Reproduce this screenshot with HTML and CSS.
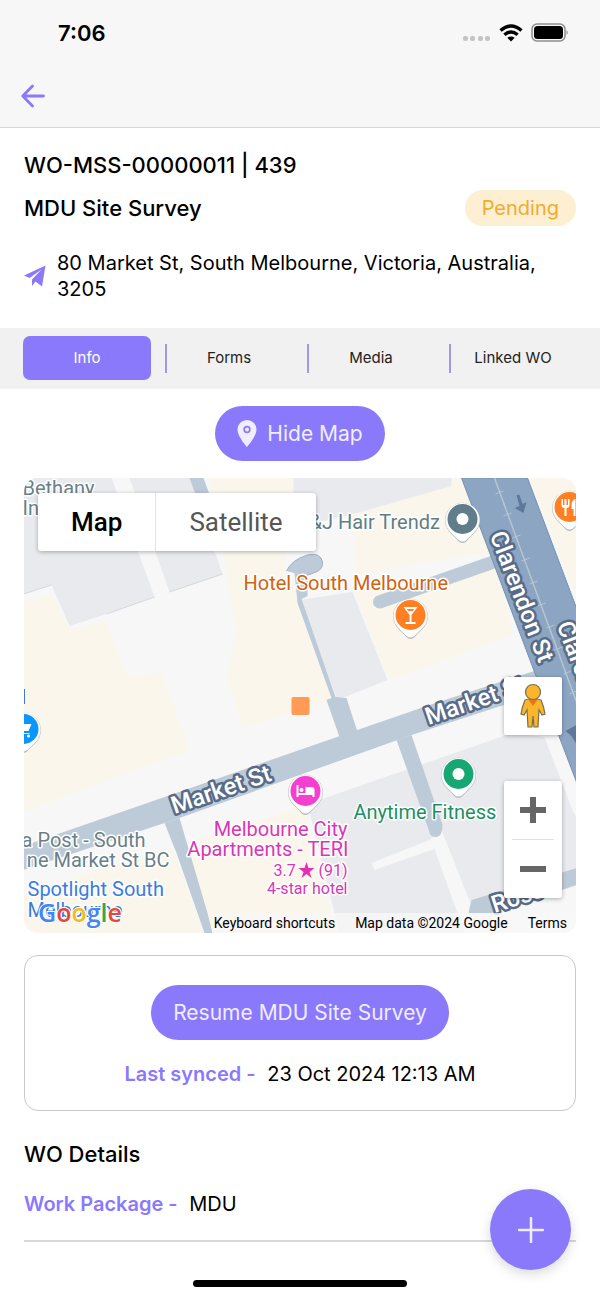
FILE: index.html
```
<!DOCTYPE html>
<html lang="en">
<head>
  <meta charset="UTF-8">
  <meta name="viewport" content="width=device-width, initial-scale=1">
  <title>MDU Site Survey</title>
  <link rel="stylesheet" href="styles.css">
</head>
<body>
  <header class="topbar">
    <div class="status">
      <span class="time">7:06</span>
      <div class="status-icons">
        <svg width="28" height="6" viewBox="0 0 28 6" fill="#c4c4c4">
          <rect x="0" y="0" width="5" height="5" rx="2"/>
          <rect x="7" y="0" width="5" height="5" rx="2"/>
          <rect x="15" y="0" width="5" height="5" rx="2"/>
          <rect x="22" y="0" width="5" height="5" rx="2"/>
        </svg>
        <svg width="24" height="18" viewBox="0 0 24 18">
          <path d="M1.500 6.500Q12-2.500 22.500 6.500M5.400 10.800Q12 5 18.600 10.800" fill="none" stroke="#000" stroke-width="3.400"/>
          <path d="M12 17.500L8.300 13.800Q12 11 15.700 13.800Z"/>
        </svg>
        <svg width="38" height="20" viewBox="0 0 38 20">
          <rect x="1" y="1" width="33" height="17" rx="5" fill="none" stroke="#8e8e8e" stroke-width="1.500"/>
          <rect x="3" y="3" width="29" height="13" rx="3.500"/>
          <path d="M35.500 7Q38 9.500 35.500 12Z" fill="#8e8e8e"/>
        </svg>
      </div>
    </div>
    <a class="back" href="#" aria-label="Back">
      <svg width="24" height="24" viewBox="0 0 24 24" fill="none" stroke="#8b79fb" stroke-width="2.800" stroke-linecap="round" stroke-linejoin="round">
        <path d="M22.500 12H2M11.500 2L1.800 12L11.500 22"/>
      </svg>
    </a>
  </header>

  <section class="summary">
    <h1>WO-MSS-00000011 | 439</h1>
    <div class="title-row">
      <h2>MDU Site Survey</h2>
      <span class="badge">Pending</span>
    </div>
    <div class="address">
      <svg width="22" height="22" viewBox="0 0 22 22" fill="#8b79fb">
        <path d="M21.500.500L0 10.500L5.500 13L17.500 4.500L8 14.500V21L11.500 16.500L18 21.500Z"/>
      </svg>
      <p>80 Market St, South Melbourne, Victoria, Australia, 3205</p>
    </div>
  </section>

  <nav class="tabs">
    <button class="tab active">Info</button>
    <button class="tab">Forms</button>
    <button class="tab">Media</button>
    <button class="tab">Linked WO</button>
  </nav>

  <main>
    <button class="pill">
      <svg width="20" height="27" viewBox="0 0 20 27" fill="#f0edff">
        <path fill-rule="evenodd" d="M10 0A9.500 9.500 0 0 0 .500 9.500C.500 16.500 10 27 10 27S19.500 16.500 19.500 9.500A9.500 9.500 0 0 0 10 0ZM10 5.800A3.700 3.700 0 1 1 10 13.200A3.700 3.700 0 0 1 10 5.800Z"/>
        <circle cx="10" cy="9.500" r="2"/>
      </svg>
      Hide Map
    </button>

    <section class="map">
      <svg class="map-canvas" viewBox="0 0 553 455" preserveAspectRatio="xMidYMid slice">
        <defs>
          <g id="pin">
            <path d="M0 24Q-3 24-6 20L-12 14A17.500 17.500 0 1 1 12 14L6 20Q3 24 0 24Z" fill="#b9bcc0"/>
            <path d="M0 22.500Q-3 22.500-6 19L-12 13A17 17 0 1 1 12 13L6 19Q3 22.500 0 22.500Z" fill="#fff"/>
          </g>
        </defs>

        <!-- land -->
        <rect width="553" height="455" fill="#f7f7f7"/>
        <g fill="#faf6ec">
          <path d="M0 125L28 116L46 152L83 142L104 200L139 194L148 222L166 272L0 334Z"/>
          <path d="M186 0H276L260 90L276 125L308 222L219 250L203 197L213 154Z"/>
          <path d="M329 30L436 0L466 74L333 97Z"/>
          <path d="M331 114L476 90L489 157L366 202Z"/>
          <path d="M0 415L149 370L180 455H0Z"/>
          <path d="M163 365L280 328L312 455H188Z"/>
          <path d="M506 0H553V120Z"/>
        </g>
        <g fill="#e8eaed">
          <path d="M0 0H88L131 119L83 136L46 148L28 107L0 116Z"/>
          <path d="M106 0H166L199 96L146 114Z"/>
          <path d="M270 0H428V8L330 36L270 50Z"/>
          <path d="M276 122L329 114L364 202L314 222Z"/>
          <path d="M284 326L489 255L521 259L553 340V455H316Z"/>
        </g>
        <path d="M0 116L28 107M83 136L131 119M146 114L199 96" stroke="#d5d8dc" fill="none"/>
        <g fill="#f7f7f7">
          <path d="M406 362L418 352L451 435V455H441L411 371L351 392L348 385Z"/>
          <path d="M521 259H532L553 312V335H550Z"/>
          <path d="M448 422L553 405V455H440Z"/>
        </g>

        <!-- streets -->
        <g fill="#bdcad8">
          <path d="M166 0H180L188 22H174Z"/>
          <path d="M271 95L284 97V118L278 121L312 219L323 220L334 254L316 259L303 222L308 220L274 125Z"/>
          <path d="M141 345L156 340L184 435L189 455H181L153 375Z"/>
          <path d="M373 262L388 257L419 347Q419 358 413 359Q406 359 406 354Z"/>
          <path d="M0 368L46 352L276 272L409 226L520 190V214L388 257L156 340L0 392Z"/>
          <path d="M448 422L553 390V407L470 435H445Z"/>
        </g>
        <path d="M263 93Q268 82 284 77Q297 74 299 84Q300 92 290 95L282 98" fill="#bdcad8" stroke="#a0afc0"/>
        <path d="M356 124L470 84" stroke="#bdcad8" stroke-width="13" stroke-linecap="round"/>
        <path d="M438 0H504L553 130V304L511 194Z" fill="#8ba5c3" stroke="#7690b0"/>
        <path d="M471 0L553 224" stroke="#b8c6d0" stroke-width="1.500"/>
        <path d="M472 16L480 13M480 38L488 35M489 60L497 57M498 83L506 80M506 106L514 103M514 128L522 125M523 150L531 147M531 172L539 169M540 196L548 193M546 216L553 213" stroke="#b8c6d0"/>
        <path d="M493 17L496 28L491 30L500 35L503 24L499 26L496 17Z" fill="#5d7899"/>
        <path d="M542 253L553 247V266L548 258Z" fill="#5d7899"/>

        <!-- street names -->
        <g class="street">
          <text transform="translate(151 336) rotate(-19)">Market St</text>
          <text transform="translate(405 247) rotate(-19)">Market St</text>
          <text transform="translate(466 57) rotate(69)">Clarendon St</text>
          <text transform="translate(533 147) rotate(69)">Clarendon St</text>
          <text transform="translate(471 435) rotate(-18)">Ross</text>
        </g>

        <!-- places -->
        <g class="place">
          <text x="-1" y="17" fill="#6b7f88">Bethany</text>
          <text x="-1" y="37" fill="#6b7f88">In</text>
          <text x="286" y="51" fill="#607d86">&amp;J Hair Trendz</text>
          <text x="220" y="112" fill="#d0630f">Hotel South Melbourne</text>
          <text x="330" y="341" fill="#1d8f62">Anytime Fitness</text>
          <text x="324" y="358" text-anchor="end" fill="#d936b4">Melbourne City</text>
          <text x="325" y="378" text-anchor="end" fill="#d936b4">Apartments - TERI</text>
          <text class="small" x="250" y="398" fill="#d936b4">3.7</text>
          <text class="small" x="324" y="398" text-anchor="end" fill="#d936b4">(91)</text>
          <text class="small" x="324" y="416" text-anchor="end" fill="#d936b4">4-star hotel</text>
          <text x="122" y="369" text-anchor="end" fill="#6b7f88">a Post - South</text>
          <text x="146" y="389" text-anchor="end" fill="#6b7f88">ne Market St BC</text>
          <text x="4" y="418" fill="#3a7de0">Spotlight South</text>
          <text x="4" y="439" fill="#3a7de0">Melbourne</text>
        </g>
        <path d="M283 384L285 390H291L286 394L288 400L283 396L278 400L280 394L275 390H281Z" fill="#e32fb5"/>
        <path d="M0 211V226" stroke="#3a7de0" stroke-width="3"/>

        <!-- pins -->
        <g transform="translate(439 41)">
          <use href="#pin"/><circle r="15" fill="#607d8b"/><circle r="6" fill="#fff"/>
        </g>
        <g transform="translate(387 137)">
          <use href="#pin"/><circle r="15" fill="#ff7f22"/>
          <path d="M-7-8H7L1 0V7H5V9H-5V7H-1V0ZM-4-6L-2-4H2L4-6Z" fill="#fff" fill-rule="evenodd"/>
        </g>
        <g transform="translate(546 29)">
          <use href="#pin"/><circle r="15" fill="#ff7f22"/>
          <path d="M-8-8V-2Q-8 1-5 1V9H-3V1Q0 1 0-2V-8H-1.500V-2H-3V-8H-5V-2H-6.500V-8ZM6-8Q2-7 2-2V2H4V9H6Z" fill="#fff"/>
        </g>
        <g transform="translate(435 296)">
          <use href="#pin"/><circle r="15" fill="#17a773"/><circle r="6" fill="#fff"/>
        </g>
        <g transform="translate(282 313)">
          <use href="#pin"/><circle r="15" fill="#f53fd0"/>
          <path d="M-9-6H-7V2H0V-4H6Q9-4 9-1V6H7V4H-7V6H-9Z" fill="#fff"/><circle cx="-4" cy="-1" r="2" fill="#fff"/>
        </g>
        <g transform="translate(0 251)">
          <use href="#pin"/><circle r="15" fill="#0b95ff"/>
          <path d="M-8-7H-4L-3-5H8L5 2H-3L-4 4H6V5H-6L-4 1Z" fill="#fff"/><circle cx="-3" cy="7" r="1.500" fill="#fff"/><circle cx="5" cy="7" r="1.500" fill="#fff"/>
        </g>
        <rect x="268" y="219" width="18" height="18" rx="2" fill="#ff9a57"/>
      </svg>

      <div class="map-type">
        <button class="selected">Map</button>
        <button>Satellite</button>
      </div>

      <div class="map-side">
        <button class="map-btn pegman" aria-label="Street View">
          <svg width="28" height="46" viewBox="0 0 28 46" stroke="#77704f" stroke-width="1.200">
            <path d="M6 17Q14 14 22 17Q25 24 26 31L23 32L20 27L19 44H15L14 33L13 44H9L8 27L5 32L2 31Q3 24 6 17Z" fill="#fbb52a"/>
            <path d="M9 16H19L14 23Z" fill="#e8751a" stroke="none"/>
            <circle cx="14" cy="9" r="7.500" fill="#fbb52a"/>
          </svg>
        </button>
        <div class="zoom">
          <button class="map-btn" aria-label="Zoom in">
            <svg width="26" height="26" viewBox="0 0 26 26"><path d="M0 13H26M13 0V26" stroke="#666" stroke-width="6"/></svg>
          </button>
          <hr>
          <button class="map-btn" aria-label="Zoom out">
            <svg width="26" height="26" viewBox="0 0 26 26"><path d="M0 13H26" stroke="#666" stroke-width="6"/></svg>
          </button>
        </div>
      </div>

      <div class="google"><span class="b">G</span><span class="r">o</span><span class="y">o</span><span class="b">g</span><span class="g">l</span><span class="r">e</span></div>

      <div class="map-footer">
        <button>Keyboard shortcuts</button>
        <span>Map data ©2024 Google</span>
        <a href="#">Terms</a>
      </div>
    </section>

    <section class="sync-card">
      <button class="pill">Resume MDU Site Survey</button>
      <p class="field"><b>Last synced -</b> <span>23 Oct 2024 12:13 AM</span></p>
    </section>

    <section class="details">
      <h2>WO Details</h2>
      <p class="field"><b>Work Package -</b> <span>MDU</span></p>
    </section>
  </main>

  <button class="fab" aria-label="Add">
    <svg width="26" height="26" viewBox="0 0 26 26"><path d="M1 13H25M13 1V25" stroke="#f0edff" stroke-width="2.500" stroke-linecap="round"/></svg>
  </button>
  <div class="home-bar"></div>
</body>
</html>
```
FILE: styles.css
```
* {
  box-sizing: border-box;
}
body {
  margin: 0;
  min-height: 100vh;
  background: #fff;
  color: #000;
  font-family: Inter, "Liberation Sans", sans-serif;
  font-size: 20px;
  line-height: 26px;
}
h1, h2, p {
  margin: 0;
}
h1, h2 {
  font-size: 22px;
  font-weight: 500;
  line-height: 28px;
}
button {
  border: 0;
  padding: 0;
  background: none;
  color: inherit;
  font: inherit;
  cursor: pointer;
}
svg {
  display: block;
  flex: none;
}

.topbar {
  background: #f7f7f7;
  border-bottom: 1px solid #d8d8d8;
}
.status {
  display: flex;
  justify-content: space-between;
  align-items: center;
  height: 66px;
  padding: 0 31px 0 58px;
}
.time {
  font-size: 22px;
  font-weight: 600;
}
.status-icons {
  display: flex;
  align-items: center;
  gap: 8px;
}
.status-icons svg:first-child {
  margin-top: 12px;
}
.back {
  display: block;
  padding: 18px 21px 19px;
}

.summary {
  padding: 23px 24px 26px;
}
.title-row {
  display: flex;
  justify-content: space-between;
  align-items: center;
  margin-top: 11px;
}
.badge {
  padding: 5px 17px;
  border-radius: 18px;
  background: #fcefd2;
  color: #f3ab2f;
}
.address {
  display: flex;
  align-items: center;
  gap: 11px;
  margin-top: 24px;
}

.tabs {
  display: flex;
  padding: 8px 16px 9px;
  background: #f1f1f1;
}
.tab {
  position: relative;
  flex: 1;
  height: 44px;
  margin: 0 7px;
  border-radius: 7px;
  font-size: 15px;
  color: #222;
}
.tab.active {
  background: #8b79fb;
  color: #fff;
}
.tab + .tab::before {
  content: "";
  position: absolute;
  left: 0;
  top: 8px;
  width: 2px;
  height: 29px;
  background: #a396e6;
}

main {
  padding: 17px 24px 57px;
}
.pill {
  display: flex;
  align-items: center;
  gap: 10px;
  height: 55px;
  margin: 0 auto;
  padding: 0 22px;
  border-radius: 28px;
  background: #8b79fb;
  color: #f0edff;
  font-size: 21px;
}

.map {
  position: relative;
  height: 455px;
  margin-top: 17px;
  border-radius: 14px;
  overflow: hidden;
  font-family: Roboto, sans-serif;
}
.map-canvas {
  width: 100%;
  height: 100%;
}
.place {
  font-size: 20px;
  stroke: #fff;
  stroke-width: 3px;
  stroke-linejoin: round;
  paint-order: stroke;
}
.place .small {
  font-size: 16px;
}
.street {
  font-size: 24px;
  font-weight: 500;
  fill: #fff;
  stroke: #586b87;
  stroke-width: 5px;
  stroke-linejoin: round;
  paint-order: stroke;
}
.map-type {
  position: absolute;
  left: 14px;
  top: 15px;
  display: flex;
  background: #fff;
  border-radius: 3px;
  box-shadow: 0 1px 4px rgba(0, 0, 0, 0.3);
  color: #565656;
  font-size: 26px;
}
.map-type button {
  height: 58px;
  padding: 0 33px;
}
.map-type .selected {
  border-right: 1px solid #e3e3e3;
  color: #000;
  font-weight: 500;
}
.map-side {
  position: absolute;
  right: 14px;
  top: 199px;
  display: grid;
  gap: 46px;
}
.map-btn {
  display: grid;
  place-items: center;
  width: 58px;
  height: 58px;
}
.pegman, .zoom {
  background: #fff;
  border-radius: 2px;
  box-shadow: 0 1px 4px rgba(0, 0, 0, 0.3);
}
.zoom hr {
  height: 1px;
  margin: 0 8px;
  border: 0;
  background: #e0e0e0;
}
.google {
  position: absolute;
  left: 14px;
  bottom: 8px;
  font-family: "Open Sans", sans-serif;
  font-size: 25px;
  font-weight: 600;
  line-height: 26px;
  -webkit-text-stroke: 2px #fff;
  paint-order: stroke;
}
.google .b { color: #4285f4; }
.google .r { color: #e3483b; }
.google .y { color: #f5bb16; }
.google .g { color: #34a853; }
.map-footer {
  position: absolute;
  right: 0;
  bottom: 0;
  display: flex;
  gap: 20px;
  padding: 0 9px 0 2px;
  background: rgba(247, 247, 247, 0.8);
  font-size: 14px;
  line-height: 20px;
}
.map-footer a {
  color: #000;
  text-decoration: none;
}

.sync-card {
  margin-top: 22px;
  padding: 29px 20px 23px;
  border: 1px solid #c9c9c9;
  border-radius: 14px;
}
.field b {
  margin-right: 6px;
  color: #8b79fb;
  font-weight: 600;
}
.sync-card .field {
  margin-top: 21px;
  text-align: center;
}
.details {
  margin-top: 29px;
  padding-bottom: 23px;
  border-bottom: 2px solid #d8d8d8;
}
.details .field {
  margin-top: 23px;
}

.fab {
  position: fixed;
  right: 29px;
  bottom: 29px;
  display: grid;
  place-items: center;
  width: 81px;
  height: 81px;
  border-radius: 50%;
  background: #8b79fb;
  box-shadow: 0 4px 12px rgba(0, 0, 0, 0.15);
}
.home-bar {
  position: fixed;
  left: 50%;
  bottom: 12px;
  width: 214px;
  height: 7px;
  margin-left: -107px;
  border-radius: 4px;
  background: #000;
}
```
